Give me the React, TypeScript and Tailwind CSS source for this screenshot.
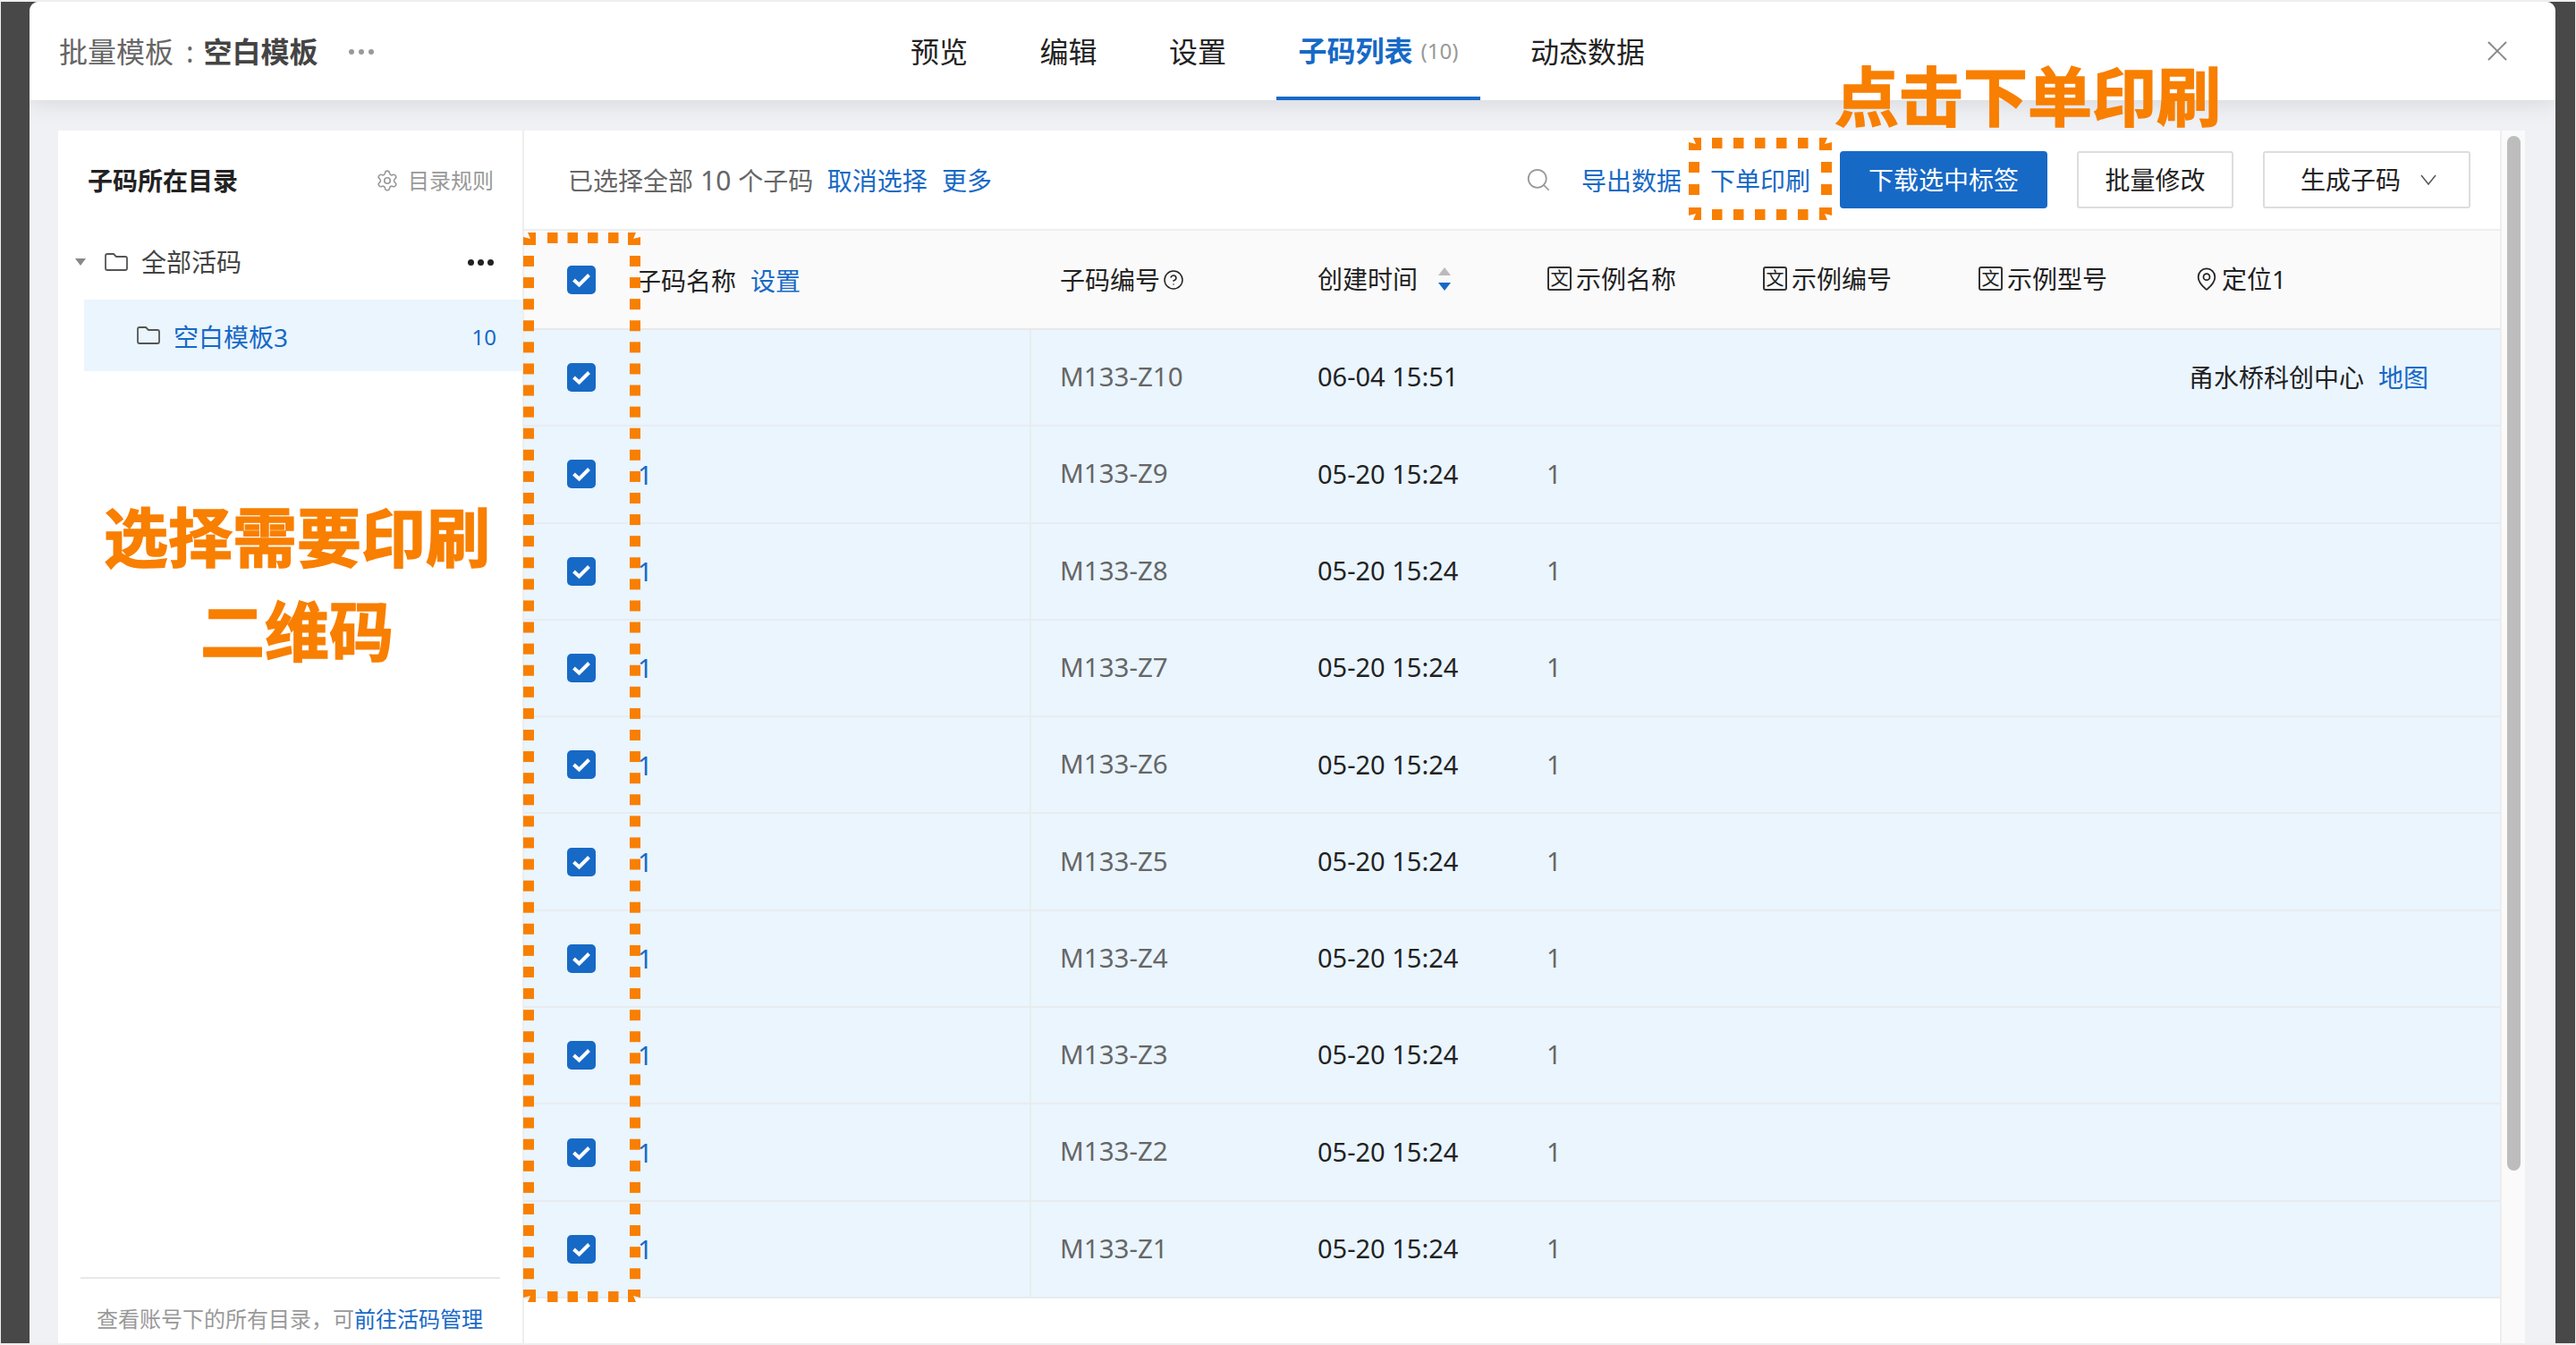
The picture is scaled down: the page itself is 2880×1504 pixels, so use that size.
import { CircleHelp, MapPin, Search, Settings, X } from 'lucide-react';

const rows = ['M133-Z10', 'M133-Z9', 'M133-Z8', 'M133-Z7', 'M133-Z6', 'M133-Z5', 'M133-Z4', 'M133-Z3', 'M133-Z2', 'M133-Z1'];
const tabs = ['预览', '编辑', '设置'];

function Checkbox() {
  return (
    <div className="w-[32px] h-[32px] rounded-[5px] bg-[#1769c6] flex items-center justify-center">
      <svg width="32" height="32" viewBox="0 0 32 32" fill="none">
        <path d="M7.5 16 L13.5 21.5 L24.5 10.5" stroke="#fff" strokeWidth="4" />
      </svg>
    </div>
  );
}

function FolderIcon() {
  return (
    <svg width="26" height="20" viewBox="0 0 26 20" fill="none" className="shrink-0">
      <path d="M1 17 V3 Q1 1 3 1 H10 L13 4 H23 Q25 4 25 6 V17 Q25 19 23 19 H3 Q1 19 1 17 Z" stroke="#555" strokeWidth="1.8" />
    </svg>
  );
}

function TextCol({ label }: { label: string }) {
  return (
    <div className="flex items-center gap-[5px] text-[28px] text-[#222] pb-[2px]">
      <span className="w-[27px] h-[27px] border-2 border-[#333] rounded-[3px] flex items-center justify-center text-[20px] leading-none shrink-0">文</span>
      {label}
    </div>
  );
}

const ORANGE = '#f87f00';
// square with the small wedge cut out of its outer corner, as the annotation tool draws it
const CORNER = '5,0 14,0 14,14 0,14 0,5 8,7';

function DottedBox({ className, w, h, xs, ys }: { className: string; w: number; h: number; xs: number[]; ys: number[] }) {
  return (
    <svg width={w} height={h} viewBox={`0 0 ${w} ${h}`} className={className} fill={ORANGE}>
      <polygon points={CORNER} />
      <polygon points={CORNER} transform={`translate(${w} 0) scale(-1 1)`} />
      <polygon points={CORNER} transform={`translate(0 ${h}) scale(1 -1)`} />
      <polygon points={CORNER} transform={`translate(${w} ${h}) scale(-1 -1)`} />
      {xs.map((x) => (
        <g key={x}>
          <rect x={x} y={0} width={11.5} height={12} />
          <rect x={x} y={h - 12} width={11.5} height={12} />
        </g>
      ))}
      {ys.map((y) => (
        <g key={y}>
          <rect x={0} y={y} width={12} height={12} />
          <rect x={w - 12} y={y} width={12} height={12} />
        </g>
      ))}
    </svg>
  );
}

function Sidebar() {
  return (
    <aside className="w-[521px] shrink-0 bg-white border-r-2 border-[#eee] flex flex-col">
      <div className="h-[112px] flex items-center justify-between pl-[33px] pr-[32px]">
        <span className="text-[28px] font-bold text-[#222]">子码所在目录</span>
        <span className="flex items-center gap-[10px] text-[24px] text-[#999]">
          <Settings size={26} strokeWidth={1.5} />
          目录规则
        </span>
      </div>
      <div className="h-[70px] flex items-center pl-[19px] pr-[32px]">
        <svg width="12" height="8" viewBox="0 0 12 8" className="shrink-0 mr-[21px]">
          <path d="M0 0 H12 L6 8 Z" fill="#888" />
        </svg>
        <FolderIcon />
        <span className="ml-[15px] text-[28px] text-[#444]">全部活码</span>
        <span className="ml-auto flex gap-[4px]">
          <i className="w-[7px] h-[7px] rounded-full bg-[#222]" />
          <i className="w-[7px] h-[7px] rounded-full bg-[#222]" />
          <i className="w-[7px] h-[7px] rounded-full bg-[#222]" />
        </span>
      </div>
      <div className="mt-[7px] ml-[29px] h-[80px] bg-[#eaf5fe] flex items-center pl-[59px] pr-[29px] text-[#1769c6]">
        <FolderIcon />
        <span className="ml-[15px] text-[28px] pt-[3px]">空白模板3</span>
        <span className="ml-auto text-[24px] pt-[3px]">10</span>
      </div>
      <div className="mt-auto mx-[25px] h-[74px] border-t-2 border-[#e8e8e8] pl-[18px] pt-[23px] text-[24px] leading-[44px] text-[#999] whitespace-nowrap">
        查看账号下的所有目录，可<span className="text-[#1769c6]">前往活码管理</span>
      </div>
    </aside>
  );
}

function Toolbar() {
  return (
    <div className="h-[112px] border-b-2 border-[#eee] flex items-center pl-[49px] pr-[33px] text-[28px] whitespace-nowrap">
      <span className="text-[#666] flex items-center pt-[1px]">
        已选择全部<span className="mx-[8px] text-[30px] leading-none">10</span>个子码
      </span>
      <span className="ml-[15.5px] pt-[1px] text-[#1769c6]">取消选择</span>
      <span className="ml-[16px] pt-[1px] text-[#1769c6]">更多</span>
      <Search size={30} strokeWidth={1.4} className="ml-auto text-[#999]" />
      <span className="ml-[33px] pt-[1px] text-[#1769c6]">导出数据</span>
      <span className="ml-[32px] pt-[1px] text-[#1769c6]">下单印刷</span>
      <button className="ml-[33px] w-[232px] h-[64px] rounded-[4px] bg-[#1769c6] text-white">下载选中标签</button>
      <button className="ml-[33px] w-[175px] h-[64px] rounded-[3px] border-2 border-[#ddd] text-[#222]">批量修改</button>
      <button className="ml-[33px] w-[232px] h-[64px] rounded-[3px] border-2 border-[#ddd] text-[#222] flex items-center pl-[40px]">
        生成子码
        <svg width="18" height="12" viewBox="0 0 18 12" fill="none" className="ml-[22px]">
          <path d="M1 1 L9 11 L17 1" stroke="#555" strokeWidth="1.5" />
        </svg>
      </button>
    </div>
  );
}

function TableHead() {
  return (
    <div className="h-[111px] bg-[#fafafa] border-b-2 border-[#e8e8e8] flex items-center text-[28px] text-[#222] whitespace-nowrap">
      <div className="w-[127px] shrink-0 flex justify-center"><Checkbox /></div>
      <div className="w-[440px] shrink-0 -indent-[2px] pt-[2px]">
        子码名称<span className="ml-[16px] text-[#1769c6]">设置</span>
      </div>
      <div className="w-[320px] shrink-0 pl-[32px] flex items-center gap-[3px]">
        子码编号
        <CircleHelp size={24} strokeWidth={1.5} />
      </div>
      <div className="w-[256px] shrink-0 flex items-center pb-[2px]">
        创建时间
        <svg width="16" height="26" viewBox="0 0 16 26" className="ml-[22px]">
          <path d="M8 0 L15 9 H1 Z" fill="#bbb" />
          <path d="M8 26 L15 17 H1 Z" fill="#1769c6" />
        </svg>
      </div>
      <div className="w-[241px] shrink-0 pl-[1px]"><TextCol label="示例名称" /></div>
      <div className="w-[241px] shrink-0 pl-[1px]"><TextCol label="示例编号" /></div>
      <div className="w-[242px] shrink-0 pl-[1px]"><TextCol label="示例型号" /></div>
      <div className="flex items-center gap-[3px] pb-[2px]">
        <MapPin size={28} strokeWidth={1.5} />
        定位1
      </div>
    </div>
  );
}

function Row({ code, index }: { code: string; index: number }) {
  const first = index === 0;
  return (
    <div className="h-[108.3px] bg-[#eaf5fe] border-b-2 border-[#e8ecef] flex items-center text-[28px] whitespace-nowrap">
      <div className="w-[127px] shrink-0 flex justify-center"><Checkbox /></div>
      <div className="w-[440px] shrink-0 h-full flex items-center text-[29px] text-[#1769c6] border-r-2 border-[#e8ecef]">{first ? '' : '1'}</div>
      <div className="w-[320px] shrink-0 pl-[32px] pb-[2px] text-[29.5px] text-[#666]">{code}</div>
      <div className="w-[256px] shrink-0 pb-[2px] text-[29px] text-[#222]">{first ? '06-04 15:51' : '05-20 15:24'}</div>
      <div className="w-[724px] shrink-0 pb-[2px] text-[29px] text-[#666]">{first ? '' : '1'}</div>
      {first && (
        <div className="-ml-[6px] text-[#222]">
          甬水桥科创中心<span className="ml-[16px] text-[#1769c6]">地图</span>
        </div>
      )}
    </div>
  );
}

export default function App() {
  return (
    <div className="relative w-[2880px] h-[1504px] overflow-hidden bg-[#484848] border-x border-y-2 border-[#eee] pl-[32px] pr-[22px] font-['Noto_Sans','Noto_Sans_CJK_SC',sans-serif]">
      <div className="h-full flex flex-col bg-[#eff1f5] rounded-t-[10px] overflow-hidden">
        <header className="h-[110px] shrink-0 bg-white flex items-center shadow-[0_4px_24px_rgba(0,0,0,0.10)] relative">
          <div className="w-[960px] shrink-0 pl-[33px] pt-[2px] flex items-center text-[32px] text-[#666] whitespace-nowrap">
            批量模板<span className="ml-[14px] mr-[11px]">:</span><span className="font-bold text-[#444]">空白模板</span>
            <span className="ml-[34px] flex gap-[5px]">
              <i className="w-[6px] h-[6px] rounded-full bg-[#999]" />
              <i className="w-[6px] h-[6px] rounded-full bg-[#999]" />
              <i className="w-[6px] h-[6px] rounded-full bg-[#999]" />
            </span>
          </div>
          <nav className="h-full flex gap-[30.5px] text-[32px] text-[#222]">
            {tabs.map((tab) => (
              <div key={tab} className="px-[25px] h-full flex items-center pt-[2px]">{tab}</div>
            ))}
            <div className="px-[25px] h-full flex items-center border-b-4 border-[#1769c6] pt-[4px]">
              <span className="font-bold text-[#1769c6]">子码列表</span>
              <span className="ml-[9px] text-[24px] text-[#999]">(10)</span>
            </div>
            <div className="px-[25px] h-full flex items-center pt-[2px]">动态数据</div>
          </nav>
          <X size={38} strokeWidth={1.2} className="ml-auto mr-[46px] text-[#888]" />
        </header>

        <div className="flex-1 min-h-0 flex pt-[34px] pl-[32px] pr-[34px]">
          <Sidebar />
          <main className="flex-1 min-w-0 flex">
            <div className="flex-1 min-w-0 bg-white">
              <Toolbar />
              <TableHead />
              {rows.map((code, index) => (
                <Row key={code} code={code} index={index} />
              ))}
            </div>
            <div className="w-[28px] shrink-0 bg-[#fafafa] border-l-2 border-[#eee] pt-[6px] pl-[6px]">
              <div className="w-[15px] h-[1157px] rounded-full bg-[#bdbdbd]" />
            </div>
          </main>
        </div>
      </div>

      <DottedBox
        className="absolute left-[584px] top-[258px]"
        w={131}
        h={1196}
        xs={[27, 49.5, 72, 95]}
        ys={Array.from({ length: 48 }, (_, i) => 26 + i * 24.09)}
      />
      <DottedBox
        className="absolute left-[1887px] top-[152px]"
        w={160}
        h={92}
        xs={[26, 50, 74, 98, 122]}
        ys={[27, 52]}
      />
      <div className="absolute left-[2050px] top-[57px] text-[72px] leading-[96px] font-bold text-[#f87f00] [-webkit-text-stroke:1.5px_#f87f00] whitespace-nowrap">
        点击下单印刷
      </div>
      <div className="absolute left-[115px] top-[546px] w-[432px] text-center text-[72px] leading-[105px] font-bold text-[#f87f00] [-webkit-text-stroke:1.5px_#f87f00] whitespace-nowrap">
        选择需要印刷
        <br />
        二维码
      </div>
    </div>
  );
}
